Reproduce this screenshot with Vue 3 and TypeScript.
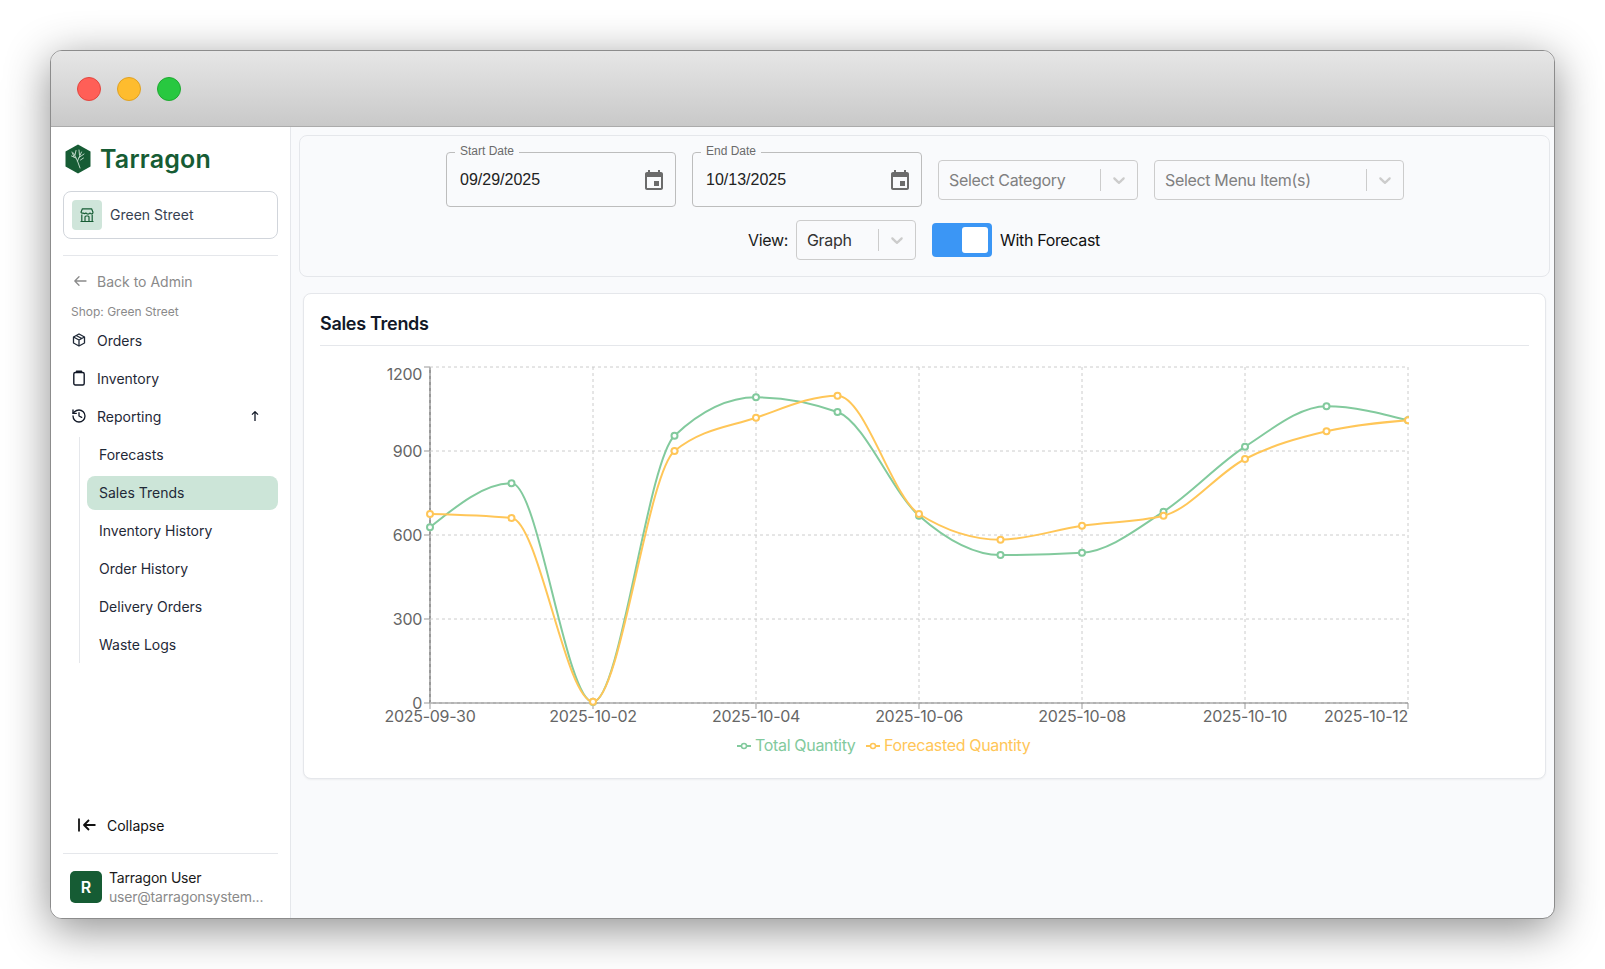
<script setup lang="ts">
type Pt = { x: number; y: number }

const x0 = 430
const x1 = 1408
const yTop = 367
const yBase = 703
const step = (x1 - x0) / 12
const greenY = [527.3, 483.3, 702, 435.7, 397.3, 412, 515.7, 555, 552.7, 511.7, 446.7, 406.3, 420.3]
const orangeY = [514, 518, 701.7, 451, 417.7, 395.7, 514, 539.7, 525.7, 515.7, 459, 431.3, 420.3]
const toPts = (ys: number[]): Pt[] => ys.map((y, i) => ({ x: x0 + i * step, y }))

function monotonePath(p: Pt[]): string {
  const n = p.length
  const t: number[] = new Array(n).fill(0)
  for (let i = 1; i < n - 1; i++) {
    const h0 = p[i].x - p[i - 1].x
    const h1 = p[i + 1].x - p[i].x
    const s0 = (p[i].y - p[i - 1].y) / h0
    const s1 = (p[i + 1].y - p[i].y) / h1
    const m = (s0 * h1 + s1 * h0) / (h0 + h1)
    t[i] = (Math.sign(s0) + Math.sign(s1)) * Math.min(Math.abs(s0), Math.abs(s1), 0.5 * Math.abs(m)) || 0
  }
  const end = (a: Pt, b: Pt, tan: number) => (3 * (b.y - a.y) / (b.x - a.x) - tan) / 2
  t[0] = end(p[0], p[1], t[1])
  t[n - 1] = end(p[n - 2], p[n - 1], t[n - 2])
  let d = `M${p[0].x},${p[0].y}`
  for (let i = 0; i < n - 1; i++) {
    const dx = (p[i + 1].x - p[i].x) / 3
    d += `C${p[i].x + dx},${p[i].y + dx * t[i]},${p[i + 1].x - dx},${p[i + 1].y - dx * t[i + 1]},${p[i + 1].x},${p[i + 1].y}`
  }
  return d
}

const series = [
  { color: '#82ca9d', pts: toPts(greenY), d: monotonePath(toPts(greenY)) },
  { color: '#ffc658', pts: toPts(orangeY), d: monotonePath(toPts(orangeY)) },
]

const yTicks = [
  { label: '1200', y: yTop, ty: 374 },
  { label: '900', y: 451, ty: 451 },
  { label: '600', y: 535, ty: 535 },
  { label: '300', y: 619, ty: 619 },
  { label: '0', y: yBase, ty: 703 },
]
const vGrid = [593, 756, 919, 1082, 1245, 1408]
const xTicks = [
  { label: '2025-09-30', x: 430, tx: 430, anchor: 'middle' },
  { label: '2025-10-02', x: 593, tx: 593, anchor: 'middle' },
  { label: '2025-10-04', x: 756, tx: 756, anchor: 'middle' },
  { label: '2025-10-06', x: 919, tx: 919, anchor: 'middle' },
  { label: '2025-10-08', x: 1082, tx: 1082, anchor: 'middle' },
  { label: '2025-10-10', x: 1245, tx: 1245, anchor: 'middle' },
  { label: '2025-10-12', x: 1408, tx: 1408, anchor: 'end' },
]
const subItems = ['Forecasts', 'Sales Trends', 'Inventory History', 'Order History', 'Delivery Orders', 'Waste Logs']
const chevron =
  'M4.516 7.548c0.436-0.446 1.043-0.481 1.576 0l3.908 3.747 3.908-3.747c0.533-0.481 1.141-0.446 1.574 0 0.436 0.445 0.408 1.197 0 1.615-0.406 0.418-4.695 4.502-4.695 4.502-0.217 0.223-0.502 0.335-0.787 0.335s-0.57-0.112-0.789-0.335c0 0-4.287-4.084-4.695-4.502s-0.436-1.17 0-1.615z'
const eventIcon =
  'M17 12h-5v5h5v-5zM16 1v2H8V1H6v2H5c-1.11 0-1.99.9-1.99 2L3 19c0 1.1.89 2 2 2h14c1.1 0 2-.9 2-2V5c0-1.1-.9-2-2-2h-1V1h-2zm3 18H5V8h14v11z'
</script>

<template>
  <div class="desktop">
    <div class="window">
      <header class="titlebar">
        <span class="dot red"></span>
        <span class="dot yellow"></span>
        <span class="dot green"></span>
      </header>
      <div class="body">
        <aside class="sidebar">
          <div class="brand">
            <svg class="logo" viewBox="0 0 26 30" width="26" height="30">
              <path d="M13 0.5 25.5 7.5V22.5L13 29.5 0.5 22.5V7.5Z" fill="#165c34" />
              <g stroke="#cfe3d6" stroke-width="0.9" fill="none" stroke-linecap="round">
                <path d="M15 24 12.5 17 8.5 9" />
                <path d="M12.5 17 16.5 8" />
                <path d="M11 14 6.5 12" />
                <path d="M14 13.5 19 10" />
                <path d="M10 11 11 6.5" />
                <path d="M14.5 11 14 6" />
                <path d="M9 13 7 8" />
                <path d="M15.5 16 18.5 14" />
              </g>
            </svg>
            <span class="brand-name">Tarragon</span>
          </div>
          <div class="shop-box">
            <span class="shop-icon">
              <svg viewBox="0 0 16 16" width="16" height="16" fill="none" stroke="#165c34" stroke-width="1.2" stroke-linejoin="round">
                <path d="M1.5 14.5h13" />
                <path d="M2.8 14.5V7.4M13.2 14.5V7.4" />
                <path d="M3.4 1.8h9.2l1.4 3.4a1.6 1.6 0 0 1-3 .8 2.4 2.4 0 0 1-4 0 2.4 2.4 0 0 1-3 0 1.6 1.6 0 0 1-2-.8Z" />
                <path d="M6 14.5V10a1 1 0 0 1 1-1h2a1 1 0 0 1 1 1v4.5" />
              </svg>
            </span>
            <span class="shop-name">Green Street</span>
          </div>
          <div class="rule"></div>
          <div class="back">
            <svg viewBox="0 0 14 14" width="14" height="14" fill="none" stroke="#8a8a8a" stroke-width="1.3" stroke-linecap="round" stroke-linejoin="round">
              <path d="M13 7H1.8M6 2.8 1.8 7 6 11.2" />
            </svg>
            <span>Back to Admin</span>
          </div>
          <div class="shop-label">Shop: Green Street</div>
          <nav class="nav">
            <div class="nav-item">
              <svg viewBox="0 0 16 16" width="16" height="16" fill="none" stroke="#1f2937" stroke-width="1.3" stroke-linejoin="round">
                <path d="M8 2 13.5 5v6L8 14 2.5 11V5Z" />
                <path d="M2.5 5 8 8l5.500-3M8 8v6M5.200 3.500 10.800 6.500" />
              </svg>
              <span>Orders</span>
            </div>
            <div class="nav-item">
              <svg viewBox="0 0 16 16" width="16" height="16" fill="none" stroke="#111827" stroke-width="1.4" stroke-linejoin="round">
                <rect x="2.800" y="2.500" width="10.400" height="12.500" rx="1.500" />
                <path d="M5.500 2.500V1.200h5v1.300" />
              </svg>
              <span>Inventory</span>
            </div>
            <div class="nav-item">
              <svg viewBox="0 0 24 24" width="16" height="16" fill="none" stroke="#111827" stroke-width="2" stroke-linecap="round" stroke-linejoin="round">
                <path d="M3 12a9 9 0 1 0 9-9 9.750 9.750 0 0 0-6.740 2.740L3 8" />
                <path d="M3 3v5h5M12 7v5l4 2" />
              </svg>
              <span class="grow">Reporting</span>
              <svg class="up" viewBox="0 0 12 12" width="12" height="12" fill="none" stroke="#111827" stroke-width="1.3" stroke-linejoin="round">
                <path d="M6 11V1.800M3 4.600 6 1.600 9 4.600" />
              </svg>
            </div>
            <div class="subnav">
              <div v-for="s in subItems" :key="s" class="sub-item" :class="{ active: s === 'Sales Trends' }">{{ s }}</div>
            </div>
          </nav>
          <div class="spacer"></div>
          <div class="collapse">
            <svg viewBox="0 0 18 14" width="18" height="14" fill="none" stroke="#111" stroke-width="1.800" stroke-linejoin="round">
              <path d="M1 0.500V13.500M17.500 7H6.500M11 2 6 7l5 5" />
            </svg>
            <span>Collapse</span>
          </div>
          <div class="rule bottom-rule"></div>
          <div class="user">
            <span class="avatar">R</span>
            <div class="user-text">
              <div class="user-name">Tarragon User</div>
              <div class="user-mail">user@tarragonsystem...</div>
            </div>
          </div>
        </aside>
        <main class="main">
          <section class="filters">
            <div class="row top-row">
              <div class="date-field">
                <span class="legend">Start Date</span>
                <span class="date-value">09/29/2025</span>
                <svg class="cal" viewBox="0 0 24 24" width="24" height="24" fill="#6b6b6b"><path :d="eventIcon" /></svg>
              </div>
              <div class="date-field">
                <span class="legend">End Date</span>
                <span class="date-value">10/13/2025</span>
                <svg class="cal" viewBox="0 0 24 24" width="24" height="24" fill="#6b6b6b"><path :d="eventIcon" /></svg>
              </div>
              <div class="select w200">
                <span class="select-text placeholder">Select Category</span>
                <span class="sep"></span>
                <svg class="chev" viewBox="0 0 20 20" width="20" height="20" fill="#cccccc"><path :d="chevron" /></svg>
              </div>
              <div class="select w250">
                <span class="select-text placeholder">Select Menu Item(s)</span>
                <span class="sep"></span>
                <svg class="chev" viewBox="0 0 20 20" width="20" height="20" fill="#cccccc"><path :d="chevron" /></svg>
              </div>
            </div>
            <div class="row view-row">
              <span class="view-label">View:</span>
              <div class="select w120">
                <span class="select-text">Graph</span>
                <span class="sep"></span>
                <svg class="chev" viewBox="0 0 20 20" width="20" height="20" fill="#cccccc"><path :d="chevron" /></svg>
              </div>
              <span class="toggle"><span class="knob"></span></span>
              <span class="toggle-label">With Forecast</span>
            </div>
          </section>
          <section class="card">
            <h2 class="card-title">Sales Trends</h2>
            <svg class="chart" viewBox="320 346 1209 416" width="1209" height="416">
              <defs>
                <clipPath id="plot-clip">
                  <rect x="320" y="346" width="1089" height="416" />
                </clipPath>
              </defs>
              <g stroke="#999999" fill="none">
                <line :x1="x0" :x2="x0" :y1="yTop" :y2="yBase" stroke-width="2" />
                <line :x1="x0" :x2="x1" :y1="yBase" :y2="yBase" stroke-width="1.500" />
                <line v-for="t in yTicks" :key="t.label" :x1="x0 - 6" :x2="x0" :y1="t.y" :y2="t.y" />
                <line v-for="t in xTicks" :key="t.label" :x1="t.x" :x2="t.x" :y1="yBase" :y2="yBase + 6" />
              </g>
              <g stroke="#cccccc" stroke-dasharray="3 3" fill="none">
                <line v-for="t in yTicks" :key="t.label" :x1="x0" :x2="x1" :y1="t.y" :y2="t.y" />
                <line :x1="x0" :x2="x0" :y1="yTop" :y2="yBase" />
                <line v-for="x in vGrid" :key="x" :x1="x" :x2="x" :y1="yTop" :y2="yBase" />
              </g>
              <g class="tick-text">
                <text v-for="t in yTicks" :key="t.label" x="422" :y="t.ty" text-anchor="end" dominant-baseline="central">{{ t.label }}</text>
                <text v-for="t in xTicks" :key="t.label" :x="t.tx" y="722" :text-anchor="t.anchor">{{ t.label }}</text>
              </g>
              <g clip-path="url(#plot-clip)">
                <g v-for="s in series" :key="s.color">
                  <path :d="s.d" fill="none" :stroke="s.color" stroke-width="2" />
                  <circle v-for="(p, i) in s.pts" :key="i" :cx="p.x" :cy="p.y" r="3" fill="#fff" :stroke="s.color" stroke-width="2" />
                </g>
              </g>
              <g class="legend-text">
                <g stroke="#82ca9d" stroke-width="2" fill="#fff">
                  <line x1="737" x2="751" y1="746" y2="746" />
                  <circle cx="744" cy="746" r="2.500" stroke-width="1.500" />
                </g>
                <text x="755" y="751" fill="#82ca9d">Total Quantity</text>
                <g stroke="#ffc658" stroke-width="2" fill="#fff">
                  <line x1="866" x2="880" y1="746" y2="746" />
                  <circle cx="873" cy="746" r="2.500" stroke-width="1.500" />
                </g>
                <text x="884" y="751" fill="#ffc658">Forecasted Quantity</text>
              </g>
            </svg>
          </section>
        </main>
      </div>
    </div>
  </div>
</template>

<style scoped>
.desktop {
  width: 1605px;
  height: 969px;
  padding: 50px 50px 50px 50px;
  box-sizing: border-box;
  background: #fff;
  overflow: hidden;
  font-family: Inter, "Liberation Sans", sans-serif;
}
.window {
  width: 1505px;
  height: 869px;
  box-sizing: border-box;
  border: 1px solid #8c8c8c;
  border-radius: 12px;
  overflow: hidden;
  display: flex;
  flex-direction: column;
  box-shadow: 0 10px 45px rgba(0, 0, 0, 0.45);
  background: #f9fafc;
}
.titlebar {
  height: 76px;
  flex: none;
  box-sizing: border-box;
  background: linear-gradient(#e6e6e6, #c9c9c9);
  border-bottom: 1px solid #ababab;
  display: flex;
  align-items: center;
  gap: 16px;
  padding: 0 26px;
}
.dot {
  width: 24px;
  height: 24px;
  border-radius: 50%;
  box-sizing: border-box;
  border: 1px solid;
}
.red { background: #ff5f57; border-color: #e2463f; }
.yellow { background: #febc2e; border-color: #dfa123; }
.green { background: #28c840; border-color: #1fa931; }
.body {
  flex: 1;
  display: flex;
  min-height: 0;
}
.sidebar {
  width: 240px;
  flex: none;
  box-sizing: border-box;
  background: #fff;
  border-right: 1px solid #e5e7eb;
  padding: 0 12px;
  display: flex;
  flex-direction: column;
}
.brand {
  height: 64px;
  flex: none;
  display: flex;
  align-items: center;
  gap: 9px;
  padding-left: 2px;
  box-sizing: border-box;
}
.brand-name {
  font-family: Inter, sans-serif;
  font-weight: 600;
  font-size: 25px;
  letter-spacing: 0.2px;
  color: #165c34;
}
.shop-box {
  height: 48px;
  flex: none;
  box-sizing: border-box;
  border: 1px solid #d1d5db;
  border-radius: 8px;
  display: flex;
  align-items: center;
  gap: 8px;
  padding-left: 8px;
}
.shop-icon {
  width: 30px;
  height: 30px;
  border-radius: 4px;
  background: #cfe5da;
  display: flex;
  align-items: center;
  justify-content: center;
}
.shop-name {
  font-size: 14px;
  color: #374151;
  margin-top: -2px;
}
.rule {
  height: 1px;
  flex: none;
  background: #e5e7eb;
  margin-top: 16px;
}
.back {
  margin-top: 12px;
  height: 26px;
  flex: none;
  display: flex;
  align-items: center;
  gap: 10px;
  padding-left: 10px;
  font-size: 14px;
  color: #8a8a8a;
}
.shop-label {
  height: 19px;
  flex: none;
  line-height: 20px;
  margin-top: 8px;
  padding-left: 8px;
  font-size: 12px;
  color: #8a8a8a;
}
.nav {
  display: flex;
  flex-direction: column;
}
.nav-item {
  height: 38px;
  flex: none;
  box-sizing: border-box;
  display: flex;
  align-items: center;
  gap: 10px;
  padding-left: 8px;
  font-size: 14px;
  color: #1f2937;
}
.grow { flex: 1; }
.up { margin-right: 17px; }
.subnav {
  margin-left: 16px;
  padding-left: 7px;
  border-left: 1px solid #e5e7eb;
  box-sizing: border-box;
  height: 226px;
  margin-top: 2px;
}
.sub-item {
  height: 34px;
  line-height: 34px;
  margin-bottom: 4px;
  border-radius: 8px;
  padding-left: 12px;
  font-size: 14px;
  color: #1f2937;
}
.sub-item:first-child { margin-top: 1px; }
.sub-item.active { background: #cce5d8; }
.spacer { flex: 1; }
.collapse {
  height: 28px;
  flex: none;
  display: flex;
  align-items: center;
  gap: 11px;
  padding-left: 15px;
  font-size: 14px;
  font-weight: 400;
  color: #111;
  margin-bottom: 1px;
}
.bottom-rule { margin-top: 13px; }
.user {
  height: 64px;
  flex: none;
  box-sizing: border-box;
  display: flex;
  align-items: center;
  gap: 7px;
  padding-left: 7px;
  padding-top: 1px;
}
.avatar {
  width: 32px;
  height: 32px;
  border-radius: 5px;
  background: #165c34;
  color: #fff;
  font-size: 16px;
  font-weight: 600;
  display: flex;
  align-items: center;
  justify-content: center;
}
.user-text { width: 160px; }
.user-name {
  font-size: 14px;
  letter-spacing: -0.2px;
  line-height: 19px;
  color: #1a1a1a;
}
.user-mail {
  font-size: 14px;
  letter-spacing: -0.2px;
  line-height: 19px;
  color: #8a8a8a;
  white-space: nowrap;
}
.main {
  flex: 1;
  min-width: 0;
  padding: 8px 4px 0 8px;
  box-sizing: border-box;
}
.filters {
  height: 142px;
  box-sizing: border-box;
  border: 1px solid #e5e7eb;
  border-radius: 8px;
  padding-top: 16px;
  padding-left: 1px;
  display: flex;
  flex-direction: column;
  align-items: center;
}
.row {
  display: flex;
  align-items: center;
}
.top-row { gap: 16px; height: 55px; }
.view-row { margin-top: 13px; margin-left: -2px; height: 40px; }
.date-field {
  width: 230px;
  height: 55px;
  box-sizing: border-box;
  border: 1px solid #bdbdbd;
  border-radius: 4px;
  position: relative;
  display: flex;
  align-items: center;
  justify-content: space-between;
  padding: 0 9px 0 13px;
}
.cal { margin-top: 2px; }
.legend {
  position: absolute;
  top: -10px;
  left: 8px;
  padding: 0 5px;
  font-family: "Liberation Sans", sans-serif;
  font-size: 12px;
  line-height: 16px;
  color: #6b6b6b;
  background: #f9fafc;
}
.date-value {
  font-family: "Liberation Sans", sans-serif;
  font-size: 16px;
  color: #222;
}
.select {
  height: 40px;
  box-sizing: border-box;
  border: 1px solid #cccccc;
  border-radius: 4px;
  display: flex;
  align-items: center;
  padding-left: 10px;
}
.w200 { width: 200px; }
.w250 { width: 250px; }
.w120 { width: 120px; }
.select-text {
  flex: 1;
  font-size: 16px;
  letter-spacing: -0.33px;
  color: #333;
}
.placeholder { color: #808080; }
.sep {
  width: 1px;
  height: 22px;
  background: #cccccc;
}
.chev { margin: 0 8px; }
.view-label {
  font-size: 16px;
  letter-spacing: -0.33px;
  color: #1a1a1a;
  margin-right: 8px;
}
.toggle {
  width: 60px;
  height: 34px;
  box-sizing: border-box;
  margin-left: 16px;
  border-radius: 4px;
  background: #3b96f5;
  display: flex;
  align-items: center;
  justify-content: flex-end;
  padding-right: 4px;
}
.knob {
  width: 26px;
  height: 26px;
  border-radius: 3px;
  background: #fff;
}
.toggle-label {
  font-size: 16px;
  letter-spacing: -0.33px;
  color: #111;
  margin-left: 8px;
}
.card {
  margin: 16px 4px 0 4px;
  height: 486px;
  box-sizing: border-box;
  background: #fff;
  border: 1px solid #e5e7eb;
  border-radius: 8px;
  box-shadow: 0 1px 2px rgba(0, 0, 0, 0.05);
  padding: 0 16px;
}
.card-title {
  margin: 0;
  height: 52px;
  box-sizing: border-box;
  border-bottom: 1px solid #e5e7eb;
  font-size: 18px;
  font-weight: 600;
  letter-spacing: -0.3px;
  line-height: 60px;
  color: #111827;
}
.chart { display: block; }
.tick-text text {
  font-size: 16px;
  letter-spacing: -0.3px;
  fill: #666;
}
.legend-text text {
  font-size: 16px;
  letter-spacing: -0.33px;
}
</style>

<style>
html, body { margin: 0; background: #fff; overflow: hidden; }
</style>
